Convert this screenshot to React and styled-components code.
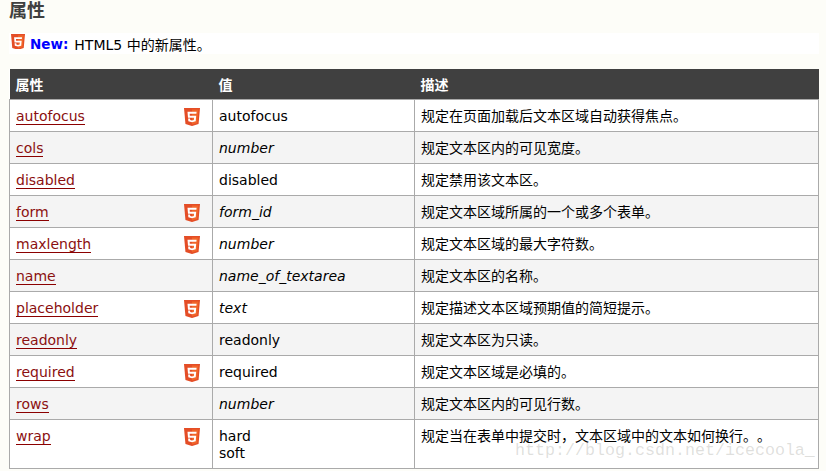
import styled, { createGlobalStyle } from 'styled-components'

const FONT = `'DejaVu Sans', 'Noto Sans CJK SC', sans-serif`

const rows = [
	{ name: 'autofocus', html5: true, value: ['autofocus'], desc: '规定在页面加载后文本区域自动获得焦点。' },
	{ name: 'cols', value: ['number'], italic: true, desc: '规定文本区内的可见宽度。' },
	{ name: 'disabled', value: ['disabled'], desc: '规定禁用该文本区。' },
	{ name: 'form', html5: true, value: ['form_id'], italic: true, desc: '规定文本区域所属的一个或多个表单。' },
	{ name: 'maxlength', html5: true, value: ['number'], italic: true, desc: '规定文本区域的最大字符数。' },
	{ name: 'name', value: ['name_of_textarea'], italic: true, desc: '规定文本区的名称。' },
	{ name: 'placeholder', html5: true, value: ['text'], italic: true, desc: '规定描述文本区域预期值的简短提示。' },
	{ name: 'readonly', value: ['readonly'], desc: '规定文本区为只读。' },
	{ name: 'required', html5: true, value: ['required'], desc: '规定文本区域是必填的。' },
	{ name: 'rows', value: ['number'], italic: true, desc: '规定文本区内的可见行数。' },
	{ name: 'wrap', html5: true, value: ['hard', 'soft'], desc: '规定当在表单中提交时，文本区域中的文本如何换行。。' },
]

function Html5Icon({ size = 16 }) {
	return (
		<svg width={size} height={size * 1.13} viewBox='0 0 32 36'>
			<path fill='#e44d26' d='M0 0h32l-2.9 32L16 36 2.9 32z' />
			<path fill='#f16529' d='M16 3v30l10.4-2.9L29 3z' />
			<path
				fill='#fff'
				d='M7 7.5h18.2l-.4 4H11.3l.3 4h12.8l-1 11L16 28.6l-7.3-2-.5-5.6h3.9l.3 2.8 3.6 1 3.7-1 .4-4.3H8z'
			/>
		</svg>
	)
}

export default function App() {
	return (
		<Page>
			<GlobalStyle />
			<Heading>属性</Heading>
			<Notice>
				<Html5Icon size={14} />
				<NewLabel>New:</NewLabel>
				<span>HTML5 中的新属性。</span>
			</Notice>
			<Table>
				<thead>
					<tr>
						<HeadCell>属性</HeadCell>
						<HeadCell>值</HeadCell>
						<HeadCell>描述</HeadCell>
					</tr>
				</thead>
				<tbody>
					{rows.map((row) => (
						<Row key={row.name}>
							<NameCell>
								<NameLink href='#'>{row.name}</NameLink>
								{row.html5 && (
									<IconSlot>
										<Html5Icon />
									</IconSlot>
								)}
							</NameCell>
							<Cell $italic={row.italic}>
								{row.value.map((v) => (
									<div key={v}>{v}</div>
								))}
							</Cell>
							<Cell>{row.desc}</Cell>
						</Row>
					))}
				</tbody>
			</Table>
			<Watermark>http://blog.csdn.net/icecoola_</Watermark>
		</Page>
	)
}

const GlobalStyle = createGlobalStyle`
	html, body {
		margin: 0;
		background: #fdfdf8;
	}
`

const Page = styled.div`
	position: relative;
	box-sizing: border-box;
	width: 826px;
	height: 471px;
	overflow: hidden;
	padding: 0 7px 0 9px;
	font-family: ${FONT};
	font-size: 14px;
	color: #000;
	text-spacing-trim: space-all;
`

const Heading = styled.h2`
	margin: 0;
	height: 33px;
	font-size: 18px;
	line-height: 21px;
	font-weight: bold;
	color: #404040;
`

const Notice = styled.div`
	display: flex;
	align-items: center;
	gap: 5px;
	height: 21px;
	margin-bottom: 15px;
	padding-left: 2px;
	background: #fff;
	font-size: 14px;

	svg {
		margin-top: -4px;
	}

	span {
		margin-left: 1px;
	}
`

const NewLabel = styled.b`
	color: #0000ff;
	font-size: 13.5px;
`

const Table = styled.table`
	width: 810px;
	table-layout: fixed;
	border-collapse: collapse;
	background: #fff;
`

const HeadCell = styled.th`
	box-sizing: border-box;
	height: 30px;
	padding: 0 6px;
	background: #404040;
	color: #fff;
	font-size: 14px;
	font-weight: bold;
	text-align: left;

	&:nth-child(1) {
		width: 203px;
	}
	&:nth-child(2) {
		width: 202px;
	}
`

const Row = styled.tr`
	&:nth-child(even) {
		background: #f4f4f4;
	}
`

const Cell = styled.td`
	padding: 8px 6px 6px;
	border: 1px solid #aaa;
	vertical-align: top;
	font-size: 14px;
	line-height: 17px;
	font-style: ${(p) => (p.$italic ? 'italic' : 'normal')};
`

const NameCell = styled(Cell)`
	position: relative;
`

const NameLink = styled.a`
	color: #8b1010;
	text-decoration: none;
	border-bottom: 1px solid #8b0000;
`

const IconSlot = styled.span`
	position: absolute;
	top: 8px;
	left: 174px;
	line-height: 0;
`

const Watermark = styled.div`
	position: absolute;
	left: 515px;
	top: 441px;
	font-family: 'Liberation Mono', monospace;
	font-size: 16.67px;
	color: rgba(130, 130, 120, 0.25);
`
